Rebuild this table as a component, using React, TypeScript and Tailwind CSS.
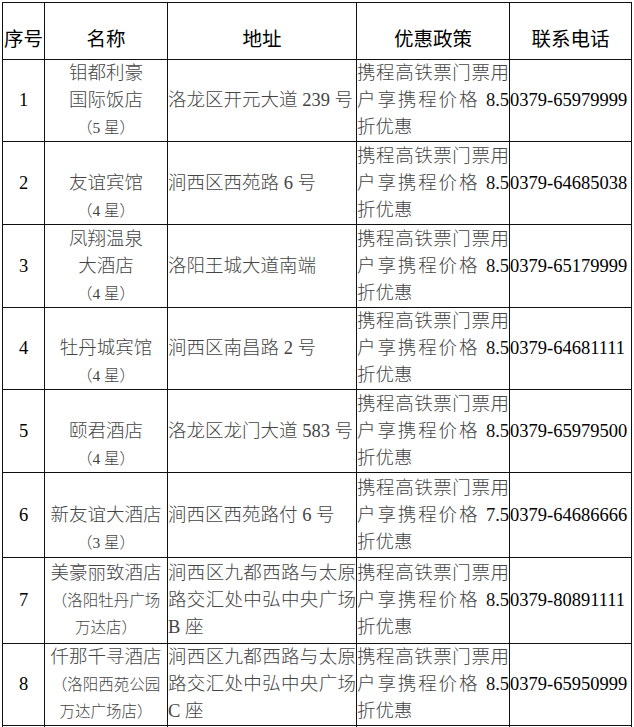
const hotels = [
  { no: '1', name: ['钼都利豪', '国际饭店'], note: ['（5 星）'], addr: ['洛龙区开元大道 239 号'], rate: '8.5', phone: '0379-65979999', h: 'h-[82px]' },
  { no: '2', name: ['', '友谊宾馆'], note: ['（4 星）'], addr: ['涧西区西苑路 6 号'], rate: '8.5', phone: '0379-64685038', h: 'h-[83px]' },
  { no: '3', name: ['凤翔温泉', '大酒店'], note: ['（4 星）'], addr: ['洛阳王城大道南端'], rate: '8.5', phone: '0379-65179999', h: 'h-[83px]' },
  { no: '4', name: ['', '牡丹城宾馆'], note: ['（4 星）'], addr: ['涧西区南昌路 2 号'], rate: '8.5', phone: '0379-64681111', h: 'h-[82px]' },
  { no: '5', name: ['', '颐君酒店'], note: ['（4 星）'], addr: ['洛龙区龙门大道 583 号'], rate: '8.5', phone: '0379-65979500', h: 'h-[83px]' },
  { no: '6', name: ['', '新友谊大酒店'], note: ['（3 星）'], addr: ['涧西区西苑路付 6 号'], rate: '7.5', phone: '0379-64686666', h: 'h-[85px]' },
  {
    no: '7',
    name: ['美豪丽致酒店'],
    note: ['（洛阳牡丹广场', '万达店）'],
    addr: ['涧西区九都西路与太原', '路交汇处中弘中央广场', 'B 座'],
    rate: '8.5',
    phone: '0379-80891111',
    h: 'h-[86px]',
  },
  {
    no: '8',
    name: ['仟那千寻酒店'],
    note: ['（洛阳西苑公园', '万达广场店）'],
    addr: ['涧西区九都西路与太原', '路交汇处中弘中央广场', 'C 座'],
    rate: '8.5',
    phone: '0379-65950999',
    h: 'h-[80px]',
  },
];

const cell = 'border border-[#111] p-0 align-middle';
const body = "font-['Liberation_Serif','Noto_Sans_CJK_SC',serif] text-[18.5px] leading-[27px]";
const head = `${cell} pt-[14px] text-center font-normal`;

export default function App() {
  return (
    <div className="min-h-screen bg-white pl-[2px] pt-[2px]">
      <table className="w-[630px] table-fixed border-collapse text-[#111]">
        <colgroup>
          <col className="w-[42px]" />
          <col className="w-[123px]" />
          <col className="w-[189px]" />
          <col className="w-[153px]" />
          <col className="w-[122px]" />
        </colgroup>
        <thead>
          <tr className="h-[57px] font-['Noto_Sans_CJK_SC',sans-serif] text-[19.5px] text-black">
            <th className={head}>序号</th>
            <th className={head}>名称</th>
            <th className={head}>地址</th>
            <th className={head}>优惠政策</th>
            <th className={head}>联系电话</th>
          </tr>
        </thead>
        <tbody>
          {hotels.map((r) => (
            <tr key={r.no} className={r.h}>
              <td className={`${cell} ${body} text-center text-black`}>{r.no}</td>
              <td className={`${cell} ${body} text-center font-light text-[#444]`}>
                {r.name.map((n, i) => (
                  <div key={i} className="h-[27px] whitespace-nowrap">
                    {n}
                  </div>
                ))}
                {r.note.map((n, i) => (
                  <div key={i} className="h-[27px] whitespace-nowrap text-[15.5px]">
                    {n}
                  </div>
                ))}
              </td>
              <td className={`${cell} ${body} font-light text-[#444]`}>
                {r.addr.map((a, i) => (
                  <div
                    key={i}
                    className={
                      i < r.addr.length - 1
                        ? 'whitespace-nowrap [text-align-last:justify] [text-align:justify]'
                        : 'whitespace-nowrap'
                    }
                  >
                    {a}
                  </div>
                ))}
              </td>
              <td className={`${cell} ${body} font-light text-[#444]`}>
                <div className="[text-align-last:justify] [text-align:justify]">携程高铁票门票用</div>
                <div className="[text-align-last:justify] [text-align:justify]">
                  户享携程价格 <span className="text-[#111]">{r.rate}</span>
                </div>
                <div>折优惠</div>
              </td>
              <td className={`${cell} ${body} whitespace-nowrap text-black`}>{r.phone}</td>
            </tr>
          ))}
          <tr className="h-[83px]">
            <td className={cell}></td>
            <td className={cell}></td>
            <td className={cell}></td>
            <td className={cell}></td>
            <td className={cell}></td>
          </tr>
        </tbody>
      </table>
    </div>
  );
}
